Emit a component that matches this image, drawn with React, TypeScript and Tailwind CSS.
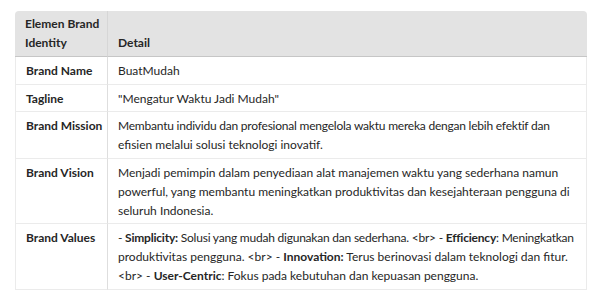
const B = ({ children }: { children: React.ReactNode }) => <b className="font-bold">{children}</b>;

// explicit line breaks so wrapping matches the reference regardless of font metrics
const rows: { label: string; lines: React.ReactNode[]; tight?: number[] }[] = [
  { label: 'Brand Name', lines: ['BuatMudah'] },
  { label: 'Tagline', lines: ['"Mengatur Waktu Jadi Mudah"'] },
  {
    label: 'Brand Mission',
    lines: [
      'Membantu individu dan profesional mengelola waktu mereka dengan lebih efektif dan',
      'efisien melalui solusi teknologi inovatif.',
    ],
    tight: [0],
  },
  {
    label: 'Brand Vision',
    lines: [
      'Menjadi pemimpin dalam penyediaan alat manajemen waktu yang sederhana namun',
      'powerful, yang membantu meningkatkan produktivitas dan kesejahteraan pengguna di',
      'seluruh Indonesia.',
    ],
  },
  {
    label: 'Brand Values',
    lines: [
      <>
        - <B>Simplicity:</B> Solusi yang mudah digunakan dan sederhana. &lt;br&gt; - <B>Efficiency</B>: Meningkatkan
      </>,
      <>
        produktivitas pengguna. &lt;br&gt; - <B>Innovation:</B> Terus berinovasi dalam teknologi dan fitur.
      </>,
      <>
        &lt;br&gt; - <B>User-Centric</B>: Fokus pada kebutuhan dan kepuasan pengguna.
      </>,
    ],
    tight: [0],
  },
];

export default function App() {
  return (
    <div className="w-[600px] h-[300px] overflow-hidden bg-white pl-[15px] pt-[11px] font-['Lato',sans-serif] text-[12px] leading-[19px] text-[#262626]">
      <table className="w-[572px] table-fixed border-separate border-spacing-0">
        <colgroup>
          <col className="w-[93px]" />
          <col />
        </colgroup>
        <thead>
          <tr className="bg-[#e3e3e3]">
            <th className="rounded-tl-[4px] border-r border-b border-[#d6d6d6] border-b-[#c6c6c6] px-[10px] pt-[3px] pb-[4px] text-left align-bottom font-bold whitespace-nowrap">
              Elemen Brand
              <br />
              Identity
            </th>
            <th className="rounded-tr-[4px] border-b border-b-[#c6c6c6] px-[10px] pt-[3px] pb-[4px] text-left align-bottom font-bold">
              Detail
            </th>
          </tr>
        </thead>
        <tbody>
          {rows.map((r) => (
            <tr key={r.label}>
              <td className="border-l border-r border-b border-[#ebebeb] border-r-[#dedede] px-[10px] pt-[4px] pb-[3.5px] align-top font-bold whitespace-nowrap">
                {r.label}
              </td>
              <td className="border-r border-b border-[#ebebeb] px-[10px] pt-[4px] pb-[3.5px] align-top whitespace-nowrap">
                {r.lines.map((l, i) => (
                  <div key={i} className={r.tight?.includes(i) ? 'tracking-[-0.22px]' : ''}>
                    {l}
                  </div>
                ))}
              </td>
            </tr>
          ))}
        </tbody>
      </table>
    </div>
  );
}
